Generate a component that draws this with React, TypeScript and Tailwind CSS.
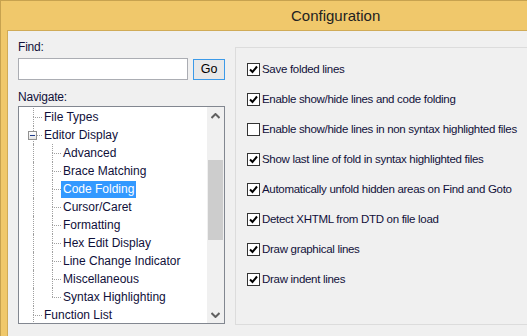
import React from "react";

const font = { fontFamily: '"Liberation Sans", Arial, sans-serif' };

type Node = { label: string; level: 0 | 1; last?: boolean; expanded?: boolean; selected?: boolean };

const tree: Node[] = [
  { label: "File Types", level: 0 },
  { label: "Editor Display", level: 0, expanded: true },
  { label: "Advanced", level: 1 },
  { label: "Brace Matching", level: 1 },
  { label: "Code Folding", level: 1, selected: true },
  { label: "Cursor/Caret", level: 1 },
  { label: "Formatting", level: 1 },
  { label: "Hex Edit Display", level: 1 },
  { label: "Line Change Indicator", level: 1 },
  { label: "Miscellaneous", level: 1 },
  { label: "Syntax Highlighting", level: 1, last: true },
  { label: "Function List", level: 0 },
];

const options = [
  { label: "Save folded lines", checked: true },
  { label: "Enable show/hide lines and code folding", checked: true },
  { label: "Enable show/hide lines in non syntax highlighted files", checked: false },
  { label: "Show last line of fold in syntax highlighted files", checked: true },
  { label: "Automatically unfold hidden areas on Find and Goto", checked: true },
  { label: "Detect XHTML from DTD on file load", checked: true },
  { label: "Draw graphical lines", checked: true },
  { label: "Draw indent lines", checked: true },
];

function Connector({ last, expanded }: { last?: boolean; expanded?: boolean }) {
  return (
    <div className="relative flex h-[18px] w-[9px] shrink-0 flex-col">
      <div className="h-[9px] border-l border-dotted border-[#a0a0a0]" />
      <div
        className={
          "h-[9px] border-t border-dotted border-[#a0a0a0] " +
          (last ? "" : "border-l")
        }
      />
      {expanded && (
        <div className="absolute left-[-5px] top-[5px] flex h-[9px] w-[9px] items-center justify-center border border-[#919191] bg-gradient-to-b from-white to-[#e4e4e4]">
          <div className="h-px w-[5px] bg-[#1e3c8c]" />
        </div>
      )}
    </div>
  );
}

function TreeRow({ node }: { node: Node }) {
  return (
    <div className="flex h-[18px] items-stretch">
      <div className="w-[14px] shrink-0" />
      {node.level === 1 && (
        <div className="w-[19px] shrink-0 border-l border-dotted border-[#a0a0a0]" />
      )}
      <Connector last={node.last} expanded={node.expanded} />
      <div className="flex items-center">
        <span
          className={
            "whitespace-nowrap px-[2px] text-[12px] leading-[17px] " +
            (node.selected ? "bg-[#3399ff] text-white" : "text-[#10103a]")
          }
        >
          {node.label}
        </span>
      </div>
    </div>
  );
}

function Chevron({ down }: { down?: boolean }) {
  return (
    <svg width="9" height="6" viewBox="0 0 9 6" className={down ? "rotate-180" : ""}>
      <path d="M0.5 5 L4.5 1 L8.5 5" fill="none" stroke="#606060" strokeWidth="2" />
    </svg>
  );
}

function Check({ checked }: { checked: boolean }) {
  return (
    <div className="flex h-[13px] w-[13px] shrink-0 items-center justify-center border border-[#333333] bg-white">
      {checked && (
        <svg width="9" height="9" viewBox="0 0 9 9">
          <path d="M1 4.5 L3.5 7 L8 1.5" fill="none" stroke="#000" strokeWidth="2" />
        </svg>
      )}
    </div>
  );
}

export default function App() {
  return (
    <div
      className="flex h-[336px] w-[527px] flex-col overflow-hidden border-l border-t border-[#c7a24f] bg-[#f0c86b]"
      style={font}
    >
      {/* Title bar */}
      <div className="flex h-[29px] shrink-0 items-center pl-[290px] pt-[1px] text-[15px] text-[#222]">
        Configuration
      </div>

      {/* Client area */}
      <div className="ml-[6px] flex flex-1 border-l border-t border-[#d0ab57] bg-[#f0f0f0]">
        {/* Left: find + navigate */}
        <div className="ml-[10px] flex w-[207px] shrink-0 flex-col pt-[8px] text-[12px] tracking-[-0.2px] text-[#10103a]">
          <div className="leading-[16px]">Find:</div>
          <div className="mt-[3px] flex items-start">
            <div className="h-[22px] w-[170px] border border-[#abadb3] bg-white" />
            <button className="ml-[5px] mt-[1px] flex h-[21px] w-[32px] items-center justify-center border border-[#3c9ae8] bg-[#e8e8e8] text-[12.5px] text-[#000]">
              Go
            </button>
          </div>
          <div className="mt-[9px] leading-[16px]">Navigate:</div>
          <div className="mt-[1px] flex h-[218px] border border-[#828790] bg-white tracking-normal">
            <div className="flex-1 overflow-hidden pt-[1px]">
              {tree.map((n) => (
                <TreeRow key={n.label} node={n} />
              ))}
            </div>
            <div className="flex w-[17px] shrink-0 flex-col bg-[#f0f0f0]">
              <div className="flex h-[17px] items-center justify-center">
                <Chevron />
              </div>
              <div className="flex-1 px-px pt-[36px]">
                <div className="h-[80px] bg-[#cdcdcd]" />
              </div>
              <div className="flex h-[17px] items-center justify-center">
                <Chevron down />
              </div>
            </div>
          </div>
        </div>

        {/* Right: options group */}
        <div className="ml-[10px] mt-[16px] flex h-[278px] w-[320px] shrink-0 flex-col gap-[17px] border border-[#dcdcdc] pl-[11px] pt-[15px]">
          {options.map((o) => (
            <div key={o.label} className="flex h-[13px] items-center gap-[2px]">
              <Check checked={o.checked} />
              <span className="whitespace-nowrap text-[11.5px] leading-[13px] tracking-[-0.3px] text-[#10103a]">
                {o.label}
              </span>
            </div>
          ))}
        </div>
      </div>
    </div>
  );
}
